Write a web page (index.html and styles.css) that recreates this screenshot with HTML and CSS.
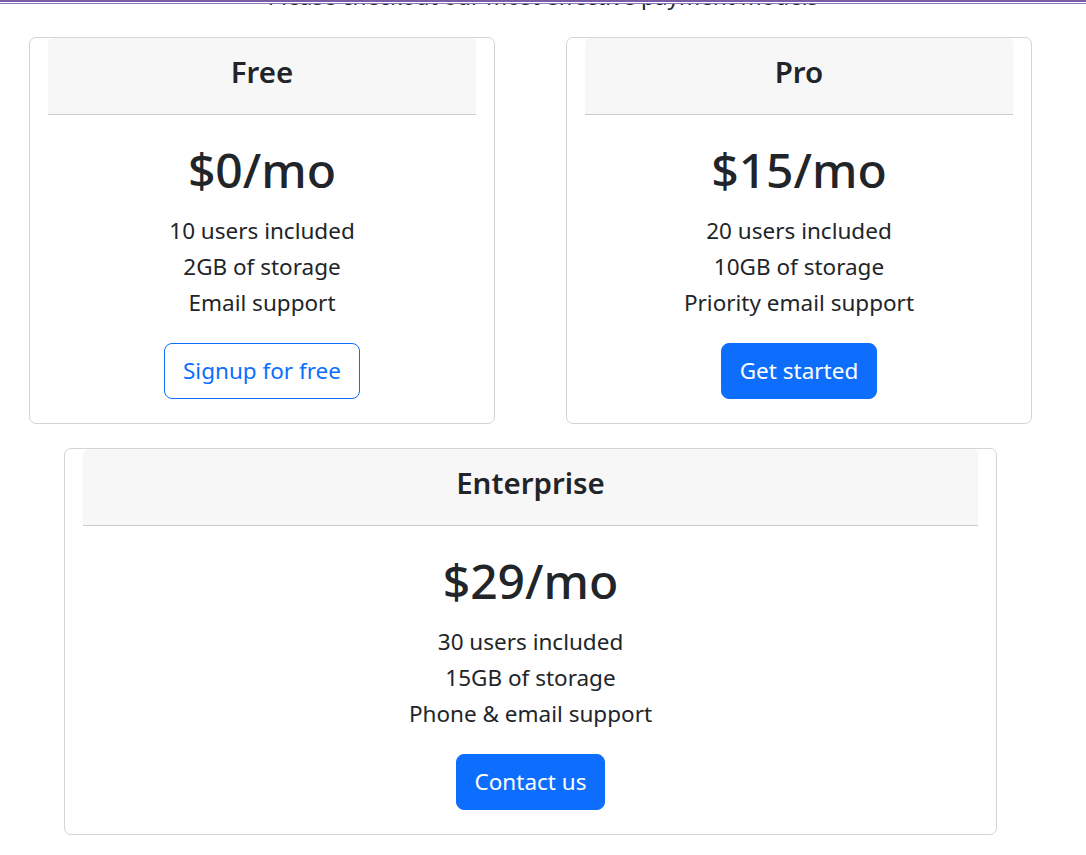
FILE: index.html
```html
<!DOCTYPE html>
<html lang="en">
<head>
<meta charset="utf-8">
<title>Pricing</title>
<link rel="stylesheet" href="styles.css">
</head>
<body>
<div class="topbar"></div>
<p class="intro">Please checkout our most effective payment models</p>
<main class="page">
  <div class="row">
    <div class="card">
      <div class="card-header"><h4>Free</h4></div>
      <div class="card-body">
        <h1 class="price">$0/mo</h1>
        <ul class="features">
          <li>10 users included</li>
          <li>2GB of storage</li>
          <li>Email support</li>
        </ul>
        <button class="btn btn-outline">Signup for free</button>
      </div>
    </div>
    <div class="card">
      <div class="card-header"><h4>Pro</h4></div>
      <div class="card-body">
        <h1 class="price">$15/mo</h1>
        <ul class="features">
          <li>20 users included</li>
          <li>10GB of storage</li>
          <li>Priority email support</li>
        </ul>
        <button class="btn btn-primary">Get started</button>
      </div>
    </div>
  </div>
  <div class="row row-single">
    <div class="card card-wide">
      <div class="card-header"><h4>Enterprise</h4></div>
      <div class="card-body">
        <h1 class="price">$29/mo</h1>
        <ul class="features">
          <li>30 users included</li>
          <li>15GB of storage</li>
          <li>Phone &amp; email support</li>
        </ul>
        <button class="btn btn-primary">Contact us</button>
      </div>
    </div>
  </div>
</main>
</body>
</html>
```
FILE: styles.css
```css
html, body {
  margin: 0;
  padding: 0;
  background: #fff;
}
body {
  font-family: "Noto Sans", "Open Sans", sans-serif;
  color: #212529;
}
.topbar {
  position: fixed;
  top: 0;
  left: 0;
  right: 0;
  height: 1px;
  background: #fff;
  border-top: 2px solid #7a5ca6;
  border-bottom: 1px solid #8d76b4;
  z-index: 5;
}
.intro {
  margin: -21px 0 0;
  height: 58px;
  font-size: 22.5px;
  line-height: 36px;
  text-align: center;
  color: #212529;
}
.page {
  width: 1003px;
  margin-left: 29px;
  display: flex;
  flex-direction: column;
  align-items: center;
}
.row {
  display: flex;
  gap: 71px;
  width: 100%;
}
.row-single {
  justify-content: center;
  margin-top: 24px;
}
.card {
  box-sizing: border-box;
  width: 466px;
  border: 1px solid #d4d4d4;
  border-radius: 7px;
  padding: 0 18px 24px;
  text-align: center;
  display: flex;
  flex-direction: column;
}
.card-wide {
  width: 933px;
}
.card-header {
  height: 76px;
  box-sizing: content-box;
  background: #f7f7f7;
  border-bottom: 1px solid #cbcbcb;
  border-radius: 5px 5px 0 0;
  display: flex;
  align-items: center;
  justify-content: center;
}
.card-header h4 {
  margin: 0 0 8px;
  font-size: 29.5px;
  font-weight: 600;
  line-height: 36px;
}
.card-body {
  padding-top: 29px;
  display: flex;
  flex-direction: column;
  align-items: center;
}
.price {
  margin: 0 0 18px;
  font-size: 48px;
  font-weight: 500;
  line-height: 51px;
}
.features {
  list-style: none;
  margin: 0 0 22px;
  padding: 0;
  font-size: 22.5px;
  line-height: 36px;
}
.btn {
  font-family: inherit;
  font-size: 22.5px;
  line-height: 36px;
  padding: 9px 18px;
  border-radius: 8px;
  border: 1px solid #0d6efd;
  cursor: pointer;
}
.btn-outline {
  background: #fff;
  color: #0d6efd;
}
.btn-primary {
  background: #0d6efd;
  color: #fff;
}
```
